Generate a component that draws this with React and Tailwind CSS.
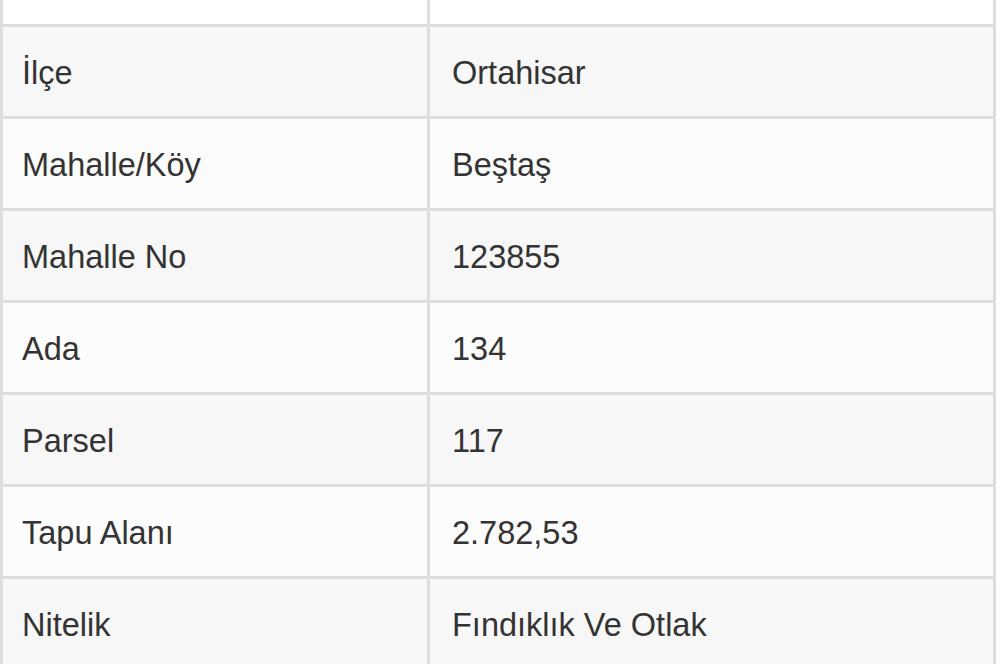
export default function App() {
  const rows = [
    ["İlçe", "Ortahisar"],
    ["Mahalle/Köy", "Beştaş"],
    ["Mahalle No", "123855"],
    ["Ada", "134"],
    ["Parsel", "117"],
    ["Tapu Alanı", "2.782,53"],
    ["Nitelik", "Fındıklık Ve Otlak"],
  ];
  return (
    <div
      className="w-[1000px] h-[664px] overflow-hidden bg-white"
      style={{ fontFamily: '"Liberation Sans", Arial, sans-serif' }}
    >
      <div className="w-[996px] border-x-[3px] border-[#dddddd] text-[32.5px] text-[#333333]">
        <div className="flex h-[27px] border-b-[3px] border-[#dddddd] bg-white">
          <div className="w-[427px] border-r-[3px] border-[#dddddd]" />
          <div className="flex-1" />
        </div>
        {rows.map(([k, v], i) => (
          <div
            key={k}
            className={
              i % 2 === 0
                ? "flex h-[92px] border-b-[3px] border-[#dddddd] bg-[#f7f7f7]"
                : "flex h-[92px] border-b-[3px] border-[#dddddd] bg-[#fcfcfc]"
            }
          >
            <div className="w-[427px] border-r-[3px] border-[#dddddd] pl-[19px] pt-[4px] flex items-center">
              {k}
            </div>
            <div className="flex-1 pl-[22px] pt-[4px] flex items-center">{v}</div>
          </div>
        ))}
      </div>
    </div>
  );
}
